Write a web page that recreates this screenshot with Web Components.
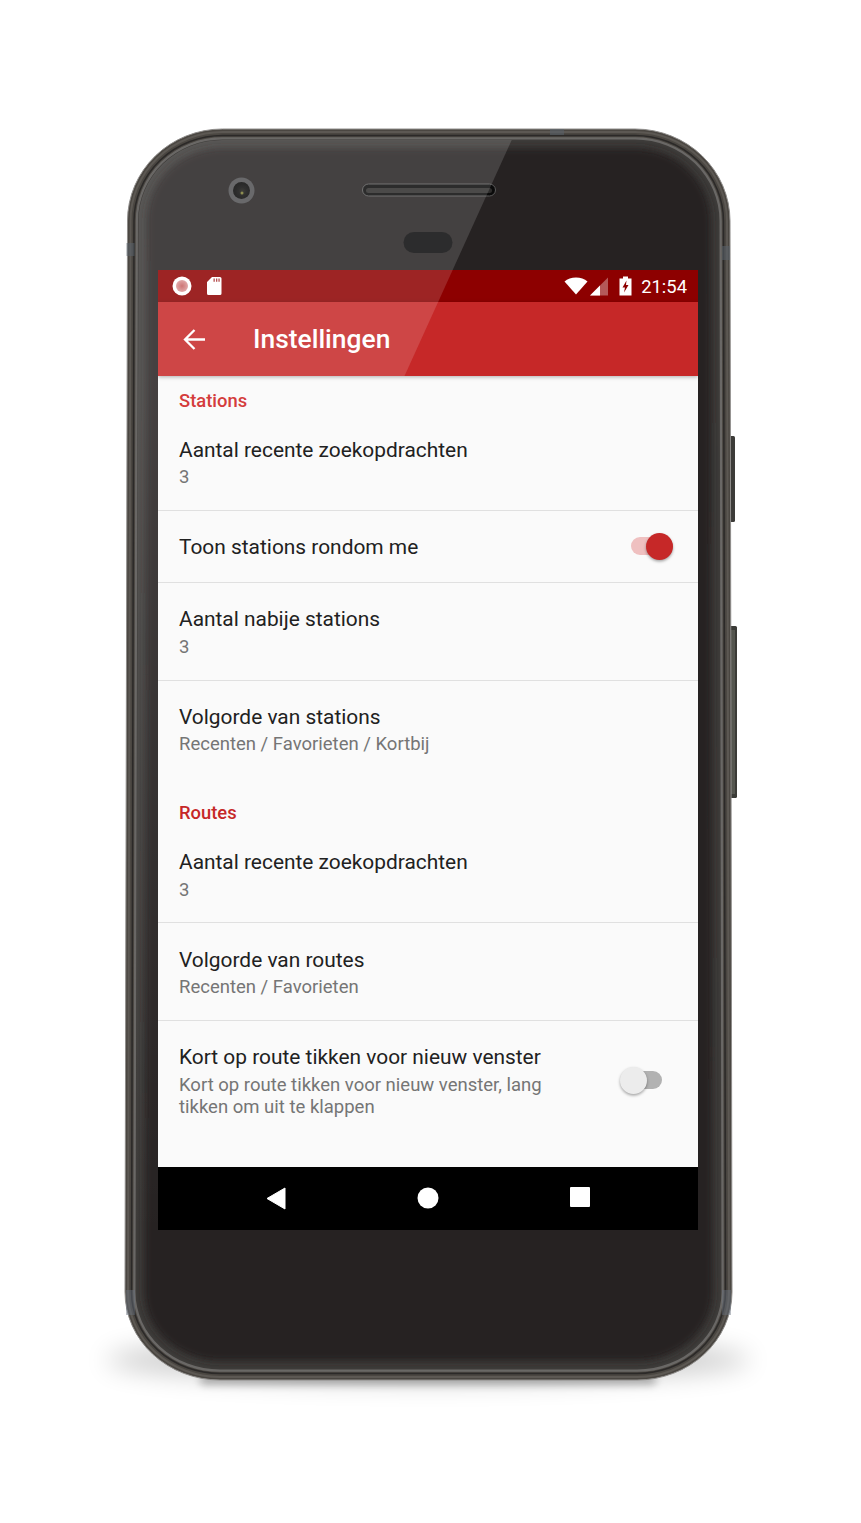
<!DOCTYPE html>
<html><head><meta charset="utf-8">
<style>
html,body{margin:0;padding:0;background:#fff;font-family:Roboto,"Liberation Sans",sans-serif}
body{width:861px;height:1523px;overflow:hidden}
</style></head><body>
<phone-device>
  <status-bar slot="screen"></status-bar>
  <app-bar slot="screen" title="Instellingen"></app-bar>
  <pref-list slot="screen">
    <pref-category first>Stations</pref-category>
    <pref-row title="Aantal recente zoekopdrachten" summary="3" divider></pref-row>
    <pref-row title="Toon stations rondom me" divider single><pref-switch on></pref-switch></pref-row>
    <pref-row title="Aantal nabije stations" summary="3" divider pt="22" gap="3"></pref-row>
    <pref-row title="Volgorde van stations" summary="Recenten / Favorieten / Kortbij" pt="22" pb="23"></pref-row>
    <pref-category>Routes</pref-category>
    <pref-row title="Aantal recente zoekopdrachten" summary="3" divider gap="3" pb="21"></pref-row>
    <pref-row title="Volgorde van routes" summary="Recenten / Favorieten" divider></pref-row>
    <pref-row title="Kort op route tikken voor nieuw venster" summary="Kort op route tikken voor nieuw venster, lang tikken om uit te klappen" pt="22" gap="3"><pref-switch></pref-switch></pref-row>
  </pref-list>
  <nav-bar slot="screen"></nav-bar>
</phone-device>
<script>
function shell(i){
  const xlt=127.5+i,xrt=730-i,xlb=125+i,xrb=732-i,t=129+i,b=1380-i;
  const rtx=95-i,rty=92-i,rbx=95-i,rby=88-i;
  return `M${xlt+rtx} ${t}H${xrt-rtx}A${rtx} ${rty} 0 0 1 ${xrt} ${t+rty}L${xrb} ${b-rby}A${rbx} ${rby} 0 0 1 ${xrb-rbx} ${b}H${xlb+rbx}A${rbx} ${rby} 0 0 1 ${xlb} ${b-rby}L${xlt} ${t+rty}A${rtx} ${rty} 0 0 1 ${xlt+rtx} ${t}Z`;
}
function def(name,html){
  customElements.define(name,class extends HTMLElement{
    constructor(){super();this.attachShadow({mode:'open'});}
    connectedCallback(){this.shadowRoot.innerHTML=typeof html==='function'?html(this):html;}
  });
}
def('phone-device',()=>`<style>
:host{display:flow-root;position:relative;width:607px;height:1251px;margin:129px 0 0 125px}
svg{position:absolute;left:-125px;top:-129px;width:861px;height:1523px}
.hw{z-index:0}.glare{z-index:2;pointer-events:none}
.screen{position:relative;z-index:1;margin:141px 0 0 33px;width:540px;height:960px;display:flex;flex-direction:column;overflow:hidden}
</style>
<svg class="hw" viewBox="0 0 861 1523">
<defs>
<filter id="bl" x="-20%" y="-150%" width="140%" height="400%"><feGaussianBlur stdDeviation="13"/></filter>
<filter id="bl2" x="-20%" y="-200%" width="140%" height="500%"><feGaussianBlur stdDeviation="4"/></filter>
<filter id="rimb" x="-5%" y="-5%" width="110%" height="110%"><feGaussianBlur stdDeviation="3.500"/></filter>
<radialGradient id="lens" cx=".55" cy=".55" r=".5"><stop offset="0" stop-color="#20201a"/><stop offset=".5" stop-color="#0e0e0e"/><stop offset="1" stop-color="#060606"/></radialGradient>
<clipPath id="in"><path d="${shell(12)}"/></clipPath>
</defs>
<ellipse cx="428" cy="1360" rx="322" ry="22" fill="#000" opacity=".2" filter="url(#bl)"/>
<rect x="200" y="1376" width="456" height="8" rx="4" fill="#000" opacity=".35" filter="url(#bl2)"/>
<rect x="729" y="436" width="6" height="86" rx="1.5" fill="#3c3b38"/>
<rect x="729" y="626" width="8" height="172" rx="1.5" fill="#3b3b37"/>
<rect x="731" y="630" width="4" height="164" fill="#55564f"/>
<path d="${shell(0)}" fill="#4a4641" stroke="#8f8d8b" stroke-width="1"/>
<path d="${shell(3)}" fill="none" stroke="#5c5853" stroke-width="2"/>
<path d="${shell(6.5)}" fill="none" stroke="#2b2928" stroke-width="1.5"/>
<path d="${shell(9)}" fill="#6a6866" stroke="#6a6866" stroke-width="1.5"/>
<path d="${shell(10.5)}" fill="#3d3b39"/>
<g clip-path="url(#in)"><path d="${shell(19)}" fill="#252323" filter="url(#rimb)"/></g>
<rect x="126.500" y="243" width="8" height="13" fill="#5a626c" opacity=".55"/>
<rect x="722" y="246" width="8" height="14" fill="#5a626c" opacity=".55"/>
<rect x="550" y="129" width="14" height="6" fill="#5a626c" opacity=".55"/>
<rect x="126" y="1290" width="9" height="25" fill="#68717e" opacity=".45"/>
<rect x="722" y="1290" width="9" height="25" fill="#68717e" opacity=".45"/>
<circle cx="241.500" cy="190.500" r="13" fill="#515153"/>
<circle cx="241.500" cy="190.500" r="8.500" fill="url(#lens)"/>
<circle cx="242" cy="193" r="1.500" fill="#7d7d35"/>
<rect x="362.500" y="184" width="133" height="12" rx="6" fill="#0a0a0a" stroke="#5a5a5a" stroke-width="1"/>
<rect x="366" y="188" width="126" height="5" rx="2.500" fill="#2e2d2c"/>
<rect x="403.500" y="232" width="49" height="21" rx="10.500" fill="#0a0a0b"/>
</svg>
<div class="screen"><slot name="screen"></slot></div>
<svg class="glare" viewBox="0 0 861 1523">
<defs><clipPath id="gc"><path d="${shell(11)}"/></clipPath>
<linearGradient id="fade" x1="0" y1="0" x2="0" y2="1"><stop offset="0" stop-color="#fff" stop-opacity=".14"/><stop offset="1" stop-color="#fff" stop-opacity="0"/></linearGradient></defs>
<polygon clip-path="url(#gc)" points="514,135 404.500,376 130,376 130,135" fill="#fff" opacity=".14"/>
<rect clip-path="url(#gc)" x="130" y="376" width="28" height="860" fill="url(#fade)"/>
</svg>`);
def('status-bar',`<style>
:host{display:flex;align-items:center;flex:none;height:32px;background:#8d0000;color:#fff;position:relative;padding:0 11px 0 14px;font:400 18.4px Roboto,sans-serif}
svg{display:block;flex:none}
.sp{flex:1}
</style>
<svg width="20" height="20" viewBox="0 0 20 20" style="margin-right:14px"><defs><radialGradient id="r"><stop offset="0" stop-color="#c76060"/><stop offset="1" stop-color="#dc9a9a"/></radialGradient></defs><circle cx="10" cy="10" r="9.500" fill="#fff"/><circle cx="10" cy="10" r="6" fill="url(#r)"/></svg>
<svg width="16" height="20" viewBox="0 0 16 20"><path d="M6 1H14a1.500 1.500 0 0 1 1.500 1.500V17.500A1.500 1.500 0 0 1 14 19H2.500A1.500 1.500 0 0 1 1 17.500V6Z" fill="#fff"/><path d="M7.500 2.500h1.300v3.300H7.500zM10 2.500h1.300v3.300H10zM12.400 2.500h1.300v3.300h-1.300z" fill="#a33"/></svg>
<span class="sp"></span>
<svg width="24" height="18" viewBox="0 0 24 18" style="margin-right:1px"><path d="M12 17.500 0.500 4.500C3.500 2 7.500 0.500 12 0.500s8.500 1.500 11.500 4Z" fill="#fff"/></svg>
<svg width="20" height="19" viewBox="0 0 20 19" style="margin-right:10px"><path d="M19 0.500V18.500H1Z" fill="#fff" opacity=".35"/><path d="M11 8.500V18.500H1Z" fill="#fff"/></svg>
<svg width="13" height="20" viewBox="0 0 13 20" style="margin-right:9px"><path d="M4 0.500H9V2.500H12.500V19.500H0.500V2.500H4Z" fill="#fff"/><path d="M7.500 4.500 3.500 11.500H6L5 16.500 9.500 9H7Z" fill="#8d0000"/></svg>
<span>21:54</span>`);
def('app-bar',el=>`<style>
:host{display:flex;align-items:center;flex:none;height:74px;background:#c62828;color:#fff;box-sizing:border-box;padding-left:25px;position:relative;z-index:1;box-shadow:0 1px 4px rgba(0,0,0,.3)}
svg{display:block;margin-right:47px;flex:none}
h1{margin:0;font:500 26.4px Roboto,sans-serif}
</style>
<svg width="23" height="21" viewBox="0 0 23 21"><path d="M22 10.500H2M11.500 1 2 10.500 11.500 20" fill="none" stroke="#fff" stroke-width="2.300"/></svg>
<h1>${el.getAttribute('title')}</h1>`);
def('pref-list',`<style>:host{display:block;flex:1;background:#fafafa;color:#212121;min-height:0}</style><slot></slot>`);
def('pref-category',el=>`<style>
:host{display:block;box-sizing:border-box;height:37px;padding:13.500px 21px 0;margin-top:${el.hasAttribute('first')?0:10}px;font:500 18.4px/21px Roboto,sans-serif;color:${el.hasAttribute('first')?'#d43c3c':'#c62828'}}
</style><slot></slot>`);
def('pref-row',el=>{
  const s=el.getAttribute('summary'),d=el.hasAttribute('divider'),one=el.hasAttribute('single');
  const pt=el.getAttribute('pt')||(one?22:23),pb=el.getAttribute('pb')||(one?21:(d?22:23)),gap=el.getAttribute('gap')||2;
  return `<style>
:host{display:flex;align-items:${s&&s.length>40?'flex-start':'center'};box-sizing:border-box;padding:${pt}px 25px ${pb}px 21px;border-bottom:${d?'1px solid #e0e0e0':'0'}}
.t{flex:1;min-width:0}
.a{font:400 20.9px/28px Roboto,sans-serif;color:#212121;white-space:nowrap}
.b{font:400 18.5px/22px Roboto,sans-serif;color:#757575;margin-top:${gap}px;max-width:400px}
</style><div class="t"><div class="a">${el.getAttribute('title')}</div>${s?`<div class="b">${s}</div>`:''}</div><slot></slot>`});
def('pref-switch',el=>{
  const on=el.hasAttribute('on');
  return `<style>
:host{display:block;position:relative;flex:none;width:42px;height:27px;${on?'margin:-1px 0 0 0':'margin:24px 11px 0 0'}}
.tr{position:absolute;left:${on?0:2}px;top:4px;width:${on?42:40}px;height:18px;border-radius:9px;background:${on?'#efc0c0':'#b2b2b2'}}
.th{position:absolute;${on?'left:15px':'left:0'};top:0;width:27px;height:27px;border-radius:50%;background:${on?'#c62828':'#ececec'};box-shadow:0 1.500px 3px rgba(0,0,0,.35)}
</style><div class="tr"></div><div class="th"></div>`});
def('nav-bar',`<style>
:host{display:flex;align-items:center;flex:none;height:63px;background:#000;position:relative;z-index:1}
svg{position:absolute;top:20px}
</style>
<svg style="left:108px" width="20" height="23" viewBox="0 0 20 23"><path d="M19 1V22L1 11.500Z" fill="#fff" stroke="#fff" stroke-linejoin="round" stroke-width="1"/></svg>
<svg style="left:259px" width="22" height="22" viewBox="0 0 22 22"><circle cx="11" cy="11" r="10.500" fill="#fff"/></svg>
<svg style="left:412px" width="20" height="20" viewBox="0 0 20 20"><rect x="0" y="0" width="20" height="20" rx="1" fill="#fff"/></svg>`);
</script>
</body></html>
